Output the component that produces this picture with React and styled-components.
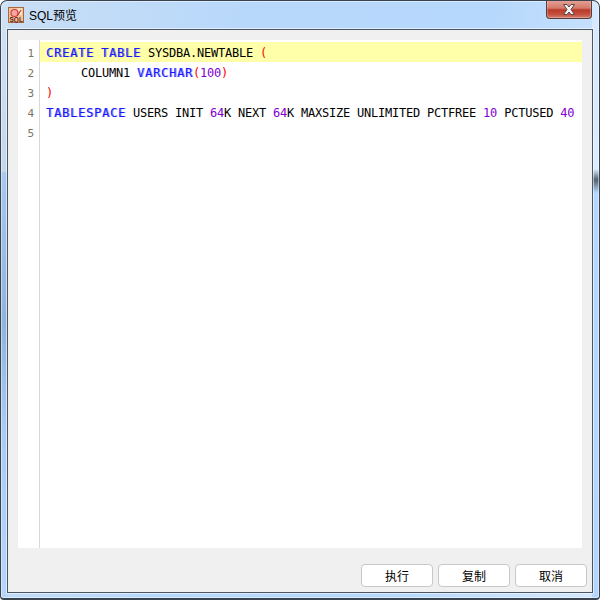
import React from 'react'
import styled, { createGlobalStyle } from 'styled-components'

const Global = createGlobalStyle`
  html, body {
    margin: 0;
    padding: 0;
    background: #fff;
  }
`

const Frame = styled.div`
  box-sizing: border-box;
  width: 600px;
  height: 600px;
  display: flex;
  flex-direction: column;
  padding: 0 6px 5px 6px;
  border: 1px solid #3a4450;
  border-bottom-width: 2px;
  border-radius: 7px 7px 4px 4px;
  box-shadow: inset 0 0 0 1px rgba(255, 255, 255, 0.45);
  background:
    linear-gradient(#cfe2f6 0, #c4d8ec 170px, #a8c8ee 172px, #8fb4dc 320px, #a8ccf2 430px, #b6d6f8 100%) left top / 7px 100% no-repeat,
    linear-gradient(#d6e8fc 0, #dcecff 168px, #5a6a7a 178px, #5a6a7a 180px, #b4d8ff 192px, #b4d6fc 100%) right top / 7px 100% no-repeat,
    linear-gradient(100deg, #c8def4 0%, #b8d8fb 35%, #b6d8fc 70%, #d4e8fe 100%);
  font-family: "Liberation Sans", "Noto Sans CJK SC", sans-serif;
  overflow: hidden;
`

const TitleBar = styled.div`
  height: 28px;
  flex: none;
  display: flex;
  align-items: center;
  gap: 5px;
  position: relative;
  padding-left: 1px;
`

const TitleText = styled.span`
  font-size: 12px;
  color: #000;
  padding-bottom: 1px;
`

const CloseButton = styled.div`
  position: absolute;
  top: -1px;
  right: 1px;
  width: 46px;
  height: 19px;
  box-sizing: border-box;
  border: 1px solid #5a3a3a;
  border-top: none;
  border-radius: 0 0 4px 4px;
  box-shadow: inset 0 0 0 1px rgba(255, 255, 255, 0.25);
  background: linear-gradient(#e6a498 0%, #d47a6a 45%, #bb3a2a 55%, #c4503e 80%, #d4806e 100%);
  display: flex;
  align-items: center;
  justify-content: center;
`

const Body = styled.div`
  flex: 1;
  display: flex;
  flex-direction: column;
  border: 1px solid #4a5566;
  outline: 1px solid rgba(255, 255, 255, 0.55);
  background: #f0f0f0;
  padding: 10px 10px 0;
  min-height: 0;
`

const Editor = styled.div`
  flex: 1;
  display: flex;
  background: #fff;
  min-height: 0;
`

const Gutter = styled.div`
  width: 21px;
  flex: none;
  border-right: 1px solid #d8d8d8;
  padding-top: 2px;
`

const LineNumber = styled.div`
  height: 20px;
  line-height: 23px;
  text-align: right;
  padding-right: 5px;
  font-family: "DejaVu Sans Mono", monospace;
  font-size: 11px;
  color: #7c7468;
`

const Code = styled.div`
  flex: 1;
  padding-top: 2px;
  min-width: 0;
`

const CodeLine = styled.div`
  height: 20px;
  line-height: 23px;
  padding-left: 6px;
  white-space: pre;
  font-family: "DejaVu Sans Mono", monospace;
  font-size: 12px;
  letter-spacing: -0.224px;
  color: #000;
  background: ${props => props.$active ? '#ffffaa' : 'transparent'};
`

const Keyword = styled.span`
  color: #1818ff;
  letter-spacing: 0.776px;
  text-shadow: 1px 0 0 rgba(40, 40, 255, 0.55);
`

const Num = styled.span`
  color: #8000d0;
`

const Paren = styled.span`
  color: #ff0000;
`

const Footer = styled.div`
  height: 44px;
  flex: none;
  display: flex;
  justify-content: flex-end;
  align-items: flex-start;
  gap: 5px;
  padding-top: 16px;
  box-sizing: border-box;
  margin-right: -5px;
`

const Button = styled.button`
  box-sizing: border-box;
  width: 72px;
  height: 23px;
  padding: 0;
  border: 1px solid #c8c8c8;
  border-radius: 4px;
  background: #fff;
  font-family: "Noto Sans CJK SC", sans-serif;
  font-size: 12px;
  color: #000;
`

function AppIcon() {
  return (
    <svg width="16" height="16" viewBox="0 0 16 16">
      <rect x="0.5" y="0.5" width="15" height="15" fill="#f0c498" stroke="#a8683c" />
      <path d="M9 1.5 L14 1.5 L14 8 L11 8 Z" fill="#f6e4d0" />
      <circle cx="6.5" cy="6" r="3.5" fill="#f4a8a0" stroke="#d04040" strokeWidth="1.2" />
      <path d="M9.5 8.5 L13 3" stroke="#c83030" strokeWidth="1.2" />
      <text x="1.5" y="14.8" fontSize="6.5" fontWeight="bold" fontFamily="Liberation Sans" fill="#601818">SQL</text>
    </svg>
  )
}

function CloseIcon() {
  return (
    <svg width="14" height="11" viewBox="0 0 14 11">
      <path d="M1.5 0.5 L5 0.5 L7 3 L9 0.5 L12.5 0.5 L9 5.5 L12.5 10.5 L9 10.5 L7 8 L5 10.5 L1.5 10.5 L5 5.5 Z" fill="#f2f2f2" stroke="#5a4848" strokeWidth="1" />
    </svg>
  )
}

export default function App() {
  return (
    <>
      <Global />
      <Frame>
        <TitleBar>
          <AppIcon />
          <TitleText>SQL预览</TitleText>
          <CloseButton><CloseIcon /></CloseButton>
        </TitleBar>
        <Body>
          <Editor>
            <Gutter>
              {[1, 2, 3, 4, 5].map(n => <LineNumber key={n}>{n}</LineNumber>)}
            </Gutter>
            <Code>
              <CodeLine $active>
                <Keyword>CREATE</Keyword> <Keyword>TABLE</Keyword> SYSDBA.NEWTABLE <Paren>(</Paren>
              </CodeLine>
              <CodeLine>
                {'     '}COLUMN1 <Keyword>VARCHAR</Keyword><Paren>(</Paren><Num>100</Num><Paren>)</Paren>
              </CodeLine>
              <CodeLine><Paren>)</Paren></CodeLine>
              <CodeLine>
                <Keyword>TABLESPACE</Keyword> USERS INIT <Num>64</Num>K NEXT <Num>64</Num>K MAXSIZE UNLIMITED PCTFREE <Num>10</Num> PCTUSED <Num>40</Num>
              </CodeLine>
              <CodeLine />
            </Code>
          </Editor>
          <Footer>
            <Button>执行</Button>
            <Button>复制</Button>
            <Button>取消</Button>
          </Footer>
        </Body>
      </Frame>
    </>
  )
}
